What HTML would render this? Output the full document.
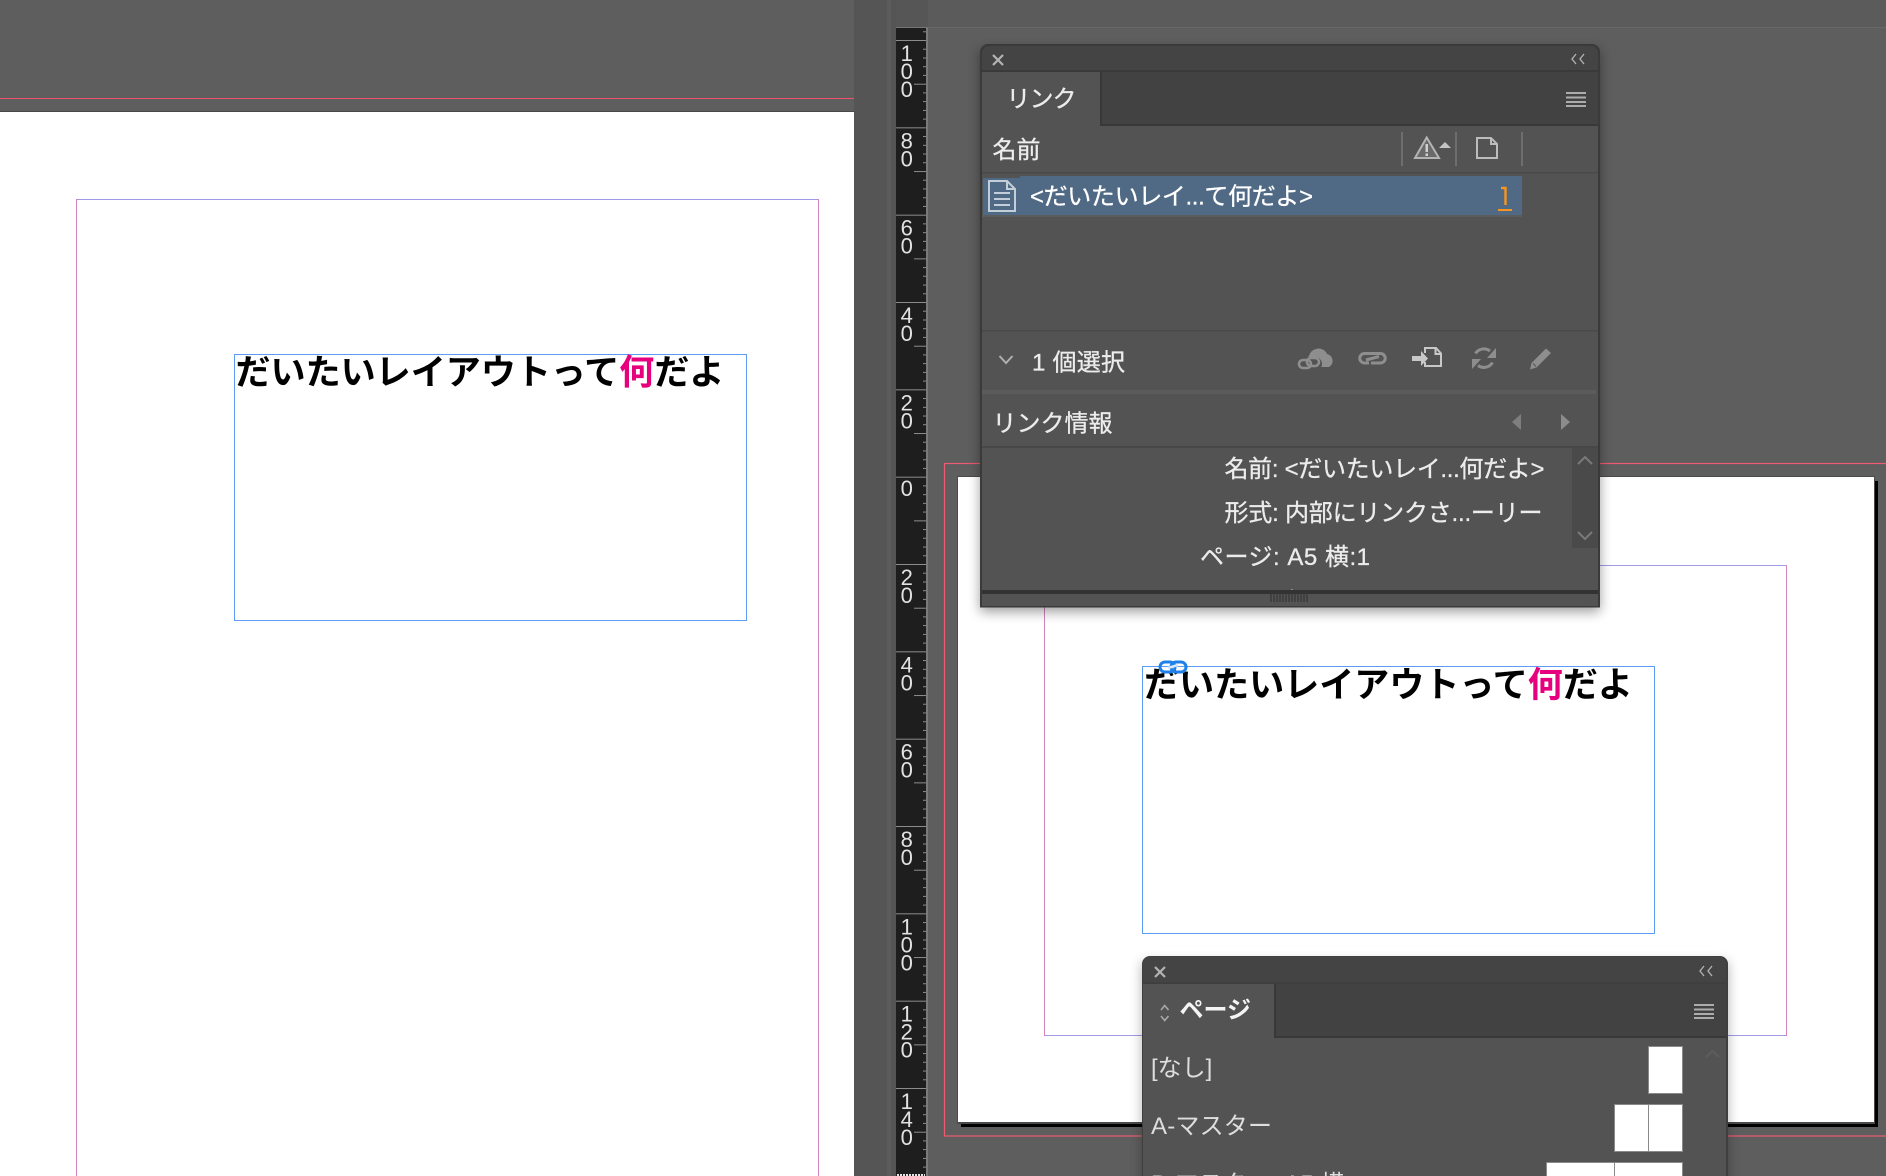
<!DOCTYPE html>
<html lang="ja">
<head>
<meta charset="utf-8">
<title>InDesign</title>
<style>
html,body{margin:0;padding:0;background:#5e5e5e;width:1886px;height:1176px;overflow:hidden}
svg{display:block;position:absolute;left:0;top:0}
text{font-family:"Liberation Sans","Noto Sans CJK JP",sans-serif}
.ui{font-size:24px;fill:#ececec;stroke:#ececec;stroke-width:.3}
.r{font-size:22px;fill:#e2e2e2;text-anchor:middle}
.h{font-size:35.05px;font-weight:700;fill:#000}
.h tspan{fill:#e6007e}
</style>
</head>
<body>
<svg width="1886" height="1176" viewBox="0 0 1886 1176" xmlns="http://www.w3.org/2000/svg">
<defs>
<g id="t" fill="#8c8c8c">
<rect x="896" y="0" width="30" height="1"/>
<rect x="923" y="8.7" width="3" height="1"/>
<rect x="923" y="17.5" width="3" height="1"/>
<rect x="923" y="26.2" width="3" height="1"/>
<rect x="923" y="34.9" width="3" height="1"/>
<rect x="914" y="43.7" width="12" height="1"/>
<rect x="923" y="52.4" width="3" height="1"/>
<rect x="923" y="61.1" width="3" height="1"/>
<rect x="923" y="69.9" width="3" height="1"/>
<rect x="923" y="78.6" width="3" height="1"/>
</g>
<filter id="sh" x="-10%" y="-10%" width="120%" height="120%"><feGaussianBlur stdDeviation="6"/></filter>
<clipPath id="c1"><rect x="982" y="447" width="590" height="143"/></clipPath>
<clipPath id="c2"><rect x="1142" y="956" width="586" height="220"/></clipPath>
</defs>

<!-- base -->
<rect width="1886" height="1176" fill="#5e5e5e"/>

<!-- left document -->
<rect x="0" y="98" width="854" height="1" fill="#f0506a"/>
<rect x="0" y="111" width="854" height="1" fill="#484848"/>
<rect x="0" y="112" width="854" height="1064" fill="#fff"/>
<rect x="76" y="199" width="742" height="1" fill="#a09ae6"/>
<rect x="76" y="199" width="1" height="977" fill="#d283c0"/>
<rect x="818" y="199" width="1" height="977" fill="#d283c0"/>
<rect x="234.5" y="354.5" width="512" height="266" fill="none" stroke="#5c9cf5" stroke-width="1"/>
<text class="h" x="235.5" y="384.7">だいたいレイアウトって<tspan>何</tspan>だよ</text>

<!-- middle strip -->
<rect x="854" y="0" width="42" height="1176" fill="#555"/>
<rect x="887" y="0" width="4" height="1176" fill="#5c5c5c"/>

<!-- right document area -->
<rect x="928" y="0" width="958" height="1176" fill="#5e5e5e"/>

<!-- bleed -->
<rect x="944.5" y="463.5" width="960" height="672.5" fill="none" stroke="#ee5a70" stroke-width="1.2"/>
<!-- page -->
<rect x="961" y="481" width="917" height="646" fill="#000"/>
<rect x="957" y="476" width="918" height="648" fill="#4a4a4a"/>
<rect x="958" y="477" width="916" height="645" fill="#fff"/>
<!-- margins -->
<rect x="1044" y="565" width="743" height="1" fill="#a09ae6"/>
<rect x="1044" y="1035" width="743" height="1" fill="#a09ae6"/>
<rect x="1044" y="565" width="1" height="471" fill="#d283c0"/>
<rect x="1786" y="565" width="1" height="471" fill="#d283c0"/>
<!-- frame -->
<rect x="1142.5" y="666.5" width="512" height="267" fill="none" stroke="#5c9cf5" stroke-width="1"/>
<text class="h" x="1144" y="697">だいたいレイアウトって<tspan>何</tspan>だよ</text>
<!-- link badge -->
<g fill="none">
<rect x="1160" y="662" width="15" height="10" rx="5" stroke="#1f80ea" stroke-width="3"/>
<rect x="1171" y="662" width="15" height="10" rx="5" stroke="#1f80ea" stroke-width="3"/>
<path d="M1168 668L1178 665" stroke="#d8e8fa" stroke-width="2.5"/>
</g>

<!-- ruler -->
<rect x="896" y="27" width="30" height="1149" fill="#1e1e1e"/>
<rect x="926" y="27" width="2" height="1149" fill="#7a7a7a"/>
<use href="#t" y="-47.33"/>
<use href="#t" y="40"/>
<use href="#t" y="127.33"/>
<use href="#t" y="214.67"/>
<use href="#t" y="302"/>
<use href="#t" y="389.33"/>
<use href="#t" y="476.67"/>
<use href="#t" y="564"/>
<use href="#t" y="651.33"/>
<use href="#t" y="738.67"/>
<use href="#t" y="826"/>
<use href="#t" y="913.33"/>
<use href="#t" y="1000.67"/>
<use href="#t" y="1088"/>
<rect x="896" y="0" width="32" height="27" fill="#565656"/>
<rect x="928" y="0" width="958" height="27" fill="#5b5b5b"/>
<rect x="896" y="27" width="32" height="1" fill="#767676"/>
<rect x="928" y="27" width="958" height="1" fill="#686868"/>
<path d="M897 1175H925" stroke="#e4e4e4" stroke-width="2" stroke-dasharray="2 1"/>

<text class="r" x="906.7" y="61">1</text><text class="r" x="906.7" y="79">0</text><text class="r" x="906.7" y="97">0</text>
<text class="r" x="906.7" y="148.3">8</text><text class="r" x="906.7" y="166.3">0</text>
<text class="r" x="906.7" y="235.7">6</text><text class="r" x="906.7" y="253.7">0</text>
<text class="r" x="906.7" y="323">4</text><text class="r" x="906.7" y="341">0</text>
<text class="r" x="906.7" y="410.3">2</text><text class="r" x="906.7" y="428.3">0</text>
<text class="r" x="906.7" y="496">0</text>
<text class="r" x="906.7" y="585">2</text><text class="r" x="906.7" y="603">0</text>
<text class="r" x="906.7" y="672.3">4</text><text class="r" x="906.7" y="690.3">0</text>
<text class="r" x="906.7" y="759.7">6</text><text class="r" x="906.7" y="777.7">0</text>
<text class="r" x="906.7" y="847">8</text><text class="r" x="906.7" y="865">0</text>
<text class="r" x="906.7" y="934.3">1</text><text class="r" x="906.7" y="952.3">0</text><text class="r" x="906.7" y="970.3">0</text>
<text class="r" x="906.7" y="1021.7">1</text><text class="r" x="906.7" y="1039.7">2</text><text class="r" x="906.7" y="1057.7">0</text>
<text class="r" x="906.7" y="1109">1</text><text class="r" x="906.7" y="1127">4</text><text class="r" x="906.7" y="1145">0</text>

<!-- ============ LINK PANEL ============ -->
<rect x="980" y="50" width="620" height="562" fill="#000" opacity=".38" filter="url(#sh)"/>
<path d="M980 52a8 8 0 0 1 8-8h604a8 8 0 0 1 8 8V607.5H980Z" fill="#3a3a3a"/>
<path d="M982 53a7 7 0 0 1 7-7h602a7 7 0 0 1 7 7V70H982Z" fill="#444"/>
<rect x="982" y="72" width="616" height="53" fill="#424242"/>
<rect x="982" y="72" width="118" height="54" fill="#535353"/>
<rect x="1100" y="72" width="2" height="54" fill="#383838"/>
<rect x="1100" y="124" width="498" height="2" fill="#383838"/>
<rect x="982" y="126" width="616" height="480" fill="#535353"/>

<path d="M993 55L1003 65M1003 55L993 65" stroke="#b4b4b4" stroke-width="2.2" fill="none"/>
<path d="M1576 54L1572 59L1576 64M1584 54L1580 59L1584 64" stroke="#b4b4b4" stroke-width="1.3" fill="none"/>
<path d="M1566 93H1586M1566 97.5H1586M1566 102H1586M1566 106H1586" stroke="#acacac" stroke-width="2" fill="none"/>

<text class="ui" x="1006.5" y="107" textLength="70">リンク</text>

<!-- header -->
<text class="ui" x="992.5" y="158">名前</text>
<rect x="982" y="172" width="616" height="1.5" fill="#4a4a4a"/>
<rect x="1401" y="132" width="2" height="34" fill="#6e6e6e"/>
<rect x="1455" y="132" width="2" height="34" fill="#6e6e6e"/>
<rect x="1521" y="132" width="2" height="34" fill="#6e6e6e"/>
<path d="M1426.7 137.5L1439 158H1415Z" fill="#6a6a6a" stroke="#b4b4b4" stroke-width="2"/>
<rect x="1425.5" y="144" width="2.5" height="8" fill="#cfcfcf"/>
<rect x="1425.5" y="153.5" width="2.5" height="2.5" fill="#cfcfcf"/>
<path d="M1439 148L1445 142L1451 148Z" fill="#c4c4c4"/>
<path d="M1477 138H1491L1497 144V158H1477Z M1491 138V144H1497" fill="none" stroke="#bcbcbc" stroke-width="2"/>

<!-- selected row -->
<rect x="982" y="215" width="540" height="2" fill="#5c5c5c"/>
<rect x="983" y="178" width="37" height="37" fill="#506a86"/>
<rect x="1020" y="176" width="502" height="39" fill="#506a86"/>
<path d="M989 181H1007L1015 189V211H989Z M1007 181V189H1015 M994 193H1010M994 199H1010M994 205H1010" fill="none" stroke="#c4ced9" stroke-width="2"/>
<text class="ui" x="1030" y="204.5" textLength="283" style="fill:#fff;stroke:#fff">&lt;だいたいレイ...て何だよ&gt;</text>
<path d="M1501 188H1505.5V205" fill="none" stroke="#f7941d" stroke-width="2.4"/>
<rect x="1498" y="209" width="14" height="2" fill="#f7941d"/>

<!-- section -->
<rect x="982" y="330" width="616" height="1.5" fill="#4a4a4a"/>
<path d="M999.5 356L1006 363L1012.5 356" fill="none" stroke="#b0b0b0" stroke-width="2"/>
<text class="ui" x="1032" y="370.5" textLength="93">1 個選択</text>

<!-- cloud link -->
<path d="M1311 367a6 6 0 0 1-2-11a9 9 0 0 1 7-7a9 9 0 0 1 11 5a7 7 0 0 1 2 13Z" fill="#8e8e8e"/>
<g fill="#535353" stroke="#535353" stroke-width="2"><rect x="1297" y="358" width="24" height="12" rx="6"/></g>
<g fill="none" stroke="#8e8e8e" stroke-width="2.6">
<rect x="1299" y="360" width="12" height="8" rx="4"/>
<rect x="1307" y="358" width="12" height="8" rx="4"/>
</g>
<!-- chain -->
<path d="M1374 353.5H1364.5a4.7 4.7 0 0 0 0 9.5H1369M1371 353.5H1380.5a4.7 4.7 0 0 1 0 9.5H1371M1366 360L1379 356.5" fill="none" stroke="#8e8e8e" stroke-width="3"/>
<!-- relink -->
<path d="M1425 353V348H1436L1441 353.5V366H1425V362 M1435.5 348V354H1441" fill="none" stroke="#c8c8c8" stroke-width="2"/>
<path d="M1412 356H1421V351L1428 358.5L1421 366V361H1412Z" fill="#c8c8c8"/>
<!-- refresh -->
<path d="M1475.5 353.5A10 10 0 0 1 1490 351M1492.5 362.5A10 10 0 0 1 1478 365.5" fill="none" stroke="#8e8e8e" stroke-width="3"/>
<path d="M1496 348V358H1487Z M1472 369V359H1481Z" fill="#8e8e8e"/>
<!-- pencil -->
<path d="M1546 348.5L1551 353L1536.5 367.5L1530 369.5L1531.5 363Z" fill="#8e8e8e"/>
<path d="M1533 363.5L1536 366.5" stroke="#535353" stroke-width="1"/>

<rect x="982" y="390" width="614" height="4" fill="#5b5b5b"/>
<text class="ui" x="992.5" y="431.5" textLength="120">リンク情報</text>
<path d="M1521 414V430L1512 422Z" fill="#7e7e7e"/>
<path d="M1561 414V430L1570 422Z" fill="#8c8c8c"/>
<rect x="982" y="446" width="616" height="2" fill="#474747"/>

<rect x="1572" y="448" width="26" height="100" fill="#4a4a4a"/>
<path d="M1578 464L1585 457L1592 464" fill="none" stroke="#7a7a7a" stroke-width="2"/>
<path d="M1578 532L1585 539L1592 532" fill="none" stroke="#7a7a7a" stroke-width="2"/>

<g clip-path="url(#c1)">
<text class="ui" x="1224.5" y="477" textLength="320">名前: &lt;だいたいレイ...何だよ&gt;</text>
<text class="ui" x="1224.5" y="521" textLength="318">形式: 内部にリンクさ...ーリー</text>
<text class="ui" x="1200" y="565" textLength="170">ページ: A5 横:1</text>
<text class="ui" x="1224" y="610">サイズ: 不明</text>
</g>

<rect x="982" y="590" width="616" height="4" fill="#333"/>
<path d="M1271 594V602M1274 594V602M1277 594V602M1280 594V602M1283 594V602M1286 594V602M1289 594V602M1292 594V602M1295 594V602M1298 594V602M1301 594V602M1304 594V602M1307 594V602" stroke="#3a3a3a" stroke-width="1.4"/>

<!-- ============ PAGES PANEL ============ -->
<rect x="1142" y="962" width="586" height="230" fill="#000" opacity=".3" filter="url(#sh)"/>
<g clip-path="url(#c2)">
<path d="M1142 964a8 8 0 0 1 8-8h570a8 8 0 0 1 8 8V1176H1142Z" fill="#3f3f3f"/>
<path d="M1143 964a7 7 0 0 1 7-7h570a6 6 0 0 1 6 6V982H1143Z" fill="#444"/>
<rect x="1143" y="984" width="583" height="53" fill="#424242"/>
<rect x="1143" y="984" width="131" height="54" fill="#535353"/>
<rect x="1274" y="984" width="2" height="54" fill="#383838"/>
<rect x="1274" y="1036" width="452" height="2" fill="#383838"/>
<rect x="1143" y="1038" width="583" height="138" fill="#535353"/>
</g>
<path d="M1155 967L1165 977M1165 967L1155 977" stroke="#b4b4b4" stroke-width="2.2" fill="none"/>
<path d="M1704 966L1700 971L1704 976M1712 966L1708 971L1712 976" stroke="#b4b4b4" stroke-width="1.3" fill="none"/>
<path d="M1694 1005H1714M1694 1009.5H1714M1694 1014H1714M1694 1018H1714" stroke="#acacac" stroke-width="2" fill="none"/>
<path d="M1161 1010L1164.7 1005.5L1168.5 1010M1161 1016L1164.7 1020.5L1168.5 1016" fill="none" stroke="#a8a8a8" stroke-width="1.6"/>
<text x="1179.5" y="1018" style="fill:#f4f4f4;font-weight:700;font-size:24px">ページ</text>

<text class="ui" x="1151" y="1076" style="fill:#dedede;stroke:none">[なし]</text>
<text class="ui" x="1151" y="1134" textLength="121" style="fill:#dedede;stroke:none">A-マスター</text>
<text class="ui" x="1151" y="1192" style="fill:#dedede;stroke:none">B-マスター_A5 横</text>

<path d="M1706 1057L1712.5 1051L1719 1057" fill="none" stroke="#5d5d5d" stroke-width="2"/>
<g fill="#fff" stroke="#8a8a8a" stroke-width="1">
<rect x="1648.5" y="1046.5" width="34" height="47"/>
<rect x="1614.5" y="1104.5" width="34" height="47"/>
<rect x="1648.5" y="1104.5" width="34" height="47"/>
<rect x="1546.5" y="1162.5" width="68" height="47"/>
<rect x="1614.5" y="1162.5" width="68" height="47"/>
</g>
</svg>
</body>
</html>
